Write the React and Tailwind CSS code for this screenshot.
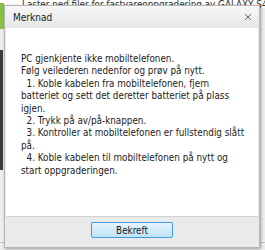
const lines = [
  "PC gjenkjente ikke mobiltelefonen.",
  "Følg veilederen nedenfor og prøv på nytt.",
  "  1. Koble kabelen fra mobiltelefonen, fjern",
  "batteriet og sett det deretter batteriet på plass",
  "igjen.",
  "  2. Trykk på av/på-knappen.",
  "  3. Kontroller at mobiltelefonen er fullstendig slått",
  "på.",
  "  4. Koble kabelen til mobiltelefonen på nytt og",
  "start oppgraderingen.",
];

const font = { fontFamily: '"DejaVu Sans Condensed", "DejaVu Sans", sans-serif' };

export default function App() {
  return (
    <div
      className="relative h-[250px] w-[265px] overflow-hidden bg-[#eceef0] text-[9.8px] text-[#222]"
      style={font}
    >
      {/* page behind the dialog */}
      <div className="flex h-[8px] items-end bg-white pl-[22px]">
        <span className="leading-[10px] -mb-[2px] whitespace-nowrap text-[#333]">
          Laster ned filer for fastvareoppgradering av GALAXY S4(GT-I9505)
        </span>
      </div>
      <div className="absolute left-0 top-[3px] h-[26px] w-[4px] bg-[#86c440]" />
      <div className="absolute left-0 top-[50px] h-[120px] w-[3px] bg-[#3a3a3a]" />
      <div className="absolute left-0 top-[242px] h-px w-full bg-[#c4c6c8]" />

      {/* dialog */}
      <div className="absolute left-[4px] top-[5px] flex h-[243px] w-[256px] flex-col border border-[#b4b6b8] bg-[#e9eaec] shadow-[1px_1px_3px_rgba(0,0,0,0.35)]">
        <div className="flex h-[22px] shrink-0 items-center justify-between bg-gradient-to-b from-[#f7f7f7] to-[#e6e7e8] pl-[8px] pr-[7px]">
          <span className="text-[10px] text-[#1a1a1a]">Merknad</span>
          <svg width="8" height="8" viewBox="0 0 8 8">
            <path d="M1 1L7 7M7 1L1 7" stroke="#666" strokeWidth="1" />
          </svg>
        </div>
        <div className="mx-px flex-1 border-b border-[#cfd1d3] bg-white pl-[15px] pt-[25px]">
          {lines.map((l, i) => (
            <div key={i} className="whitespace-pre leading-[12.4px]">
              {l}
            </div>
          ))}
        </div>
        <div className="flex h-[30px] shrink-0 justify-center pt-[5px]">
          <button className="h-[16px] w-[82px] rounded-[2px] border border-[#3d9de0] bg-gradient-to-b from-[#e6f4fd] to-[#bfe3f8] text-[9.8px] leading-[13px] text-[#1a1a1a]">
            Bekreft
          </button>
        </div>
      </div>
    </div>
  );
}
